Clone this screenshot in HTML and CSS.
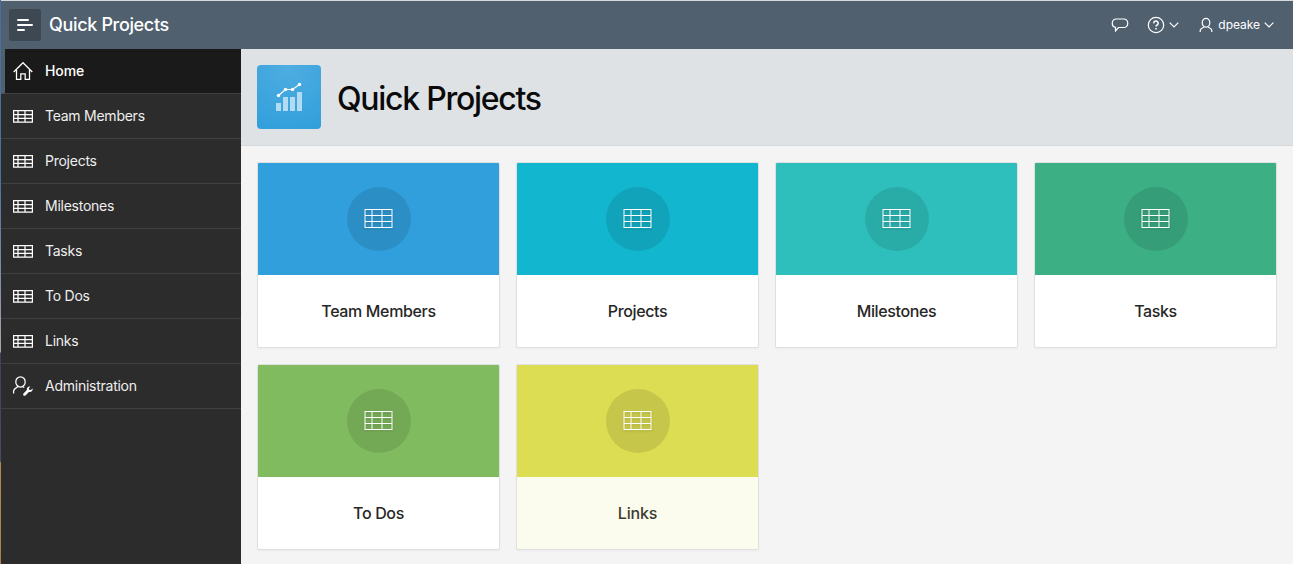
FILE: index.html
```html
<!DOCTYPE html>
<html lang="en">
<head>
<meta charset="utf-8">
<title>Quick Projects</title>
<link rel="stylesheet" href="styles.css">
</head>
<body>
<svg class="sprite" aria-hidden="true">
  <symbol id="table-sm" viewBox="0 0 20 20"><path d="M.6 4.600h18.800v11.600H.6zM.6 8.500h18.800M.6 12.300h18.800M5 4.600v11.600M12 4.600v11.600"/></symbol>
  <symbol id="table-lg" viewBox="0 0 32 32"><path d="M2 6.500h27M2 12.500h27M2 18.500h27M2 24.500h27"/><path d="M2 6v19M9 6v19M19 6v19M29 6v19"/></symbol>
  <symbol id="chevron" viewBox="0 0 10 6"><path d="M.7.7 5 5 9.300.7"/></symbol>
</svg>
<div class="app">
  <header class="header">
    <button class="menu-button" aria-label="Menu"><svg viewBox="0 0 32 32"><path d="M9 11h10M9 16h14M9 21h6"/></svg></button>
    <span class="brand">Quick Projects</span>
    <nav class="tools">
      <svg class="icon chat" viewBox="0 0 18 16"><path d="M5 2h8a3.700 3.700 0 0 1 3.700 3.700v1.100A3.700 3.700 0 0 1 13 10.500H7.500L4.500 14v-3.600A3.700 3.700 0 0 1 1.300 6.800V5.700A3.700 3.700 0 0 1 5 2z"/></svg>
      <span class="tool help"><svg class="icon help-icon" viewBox="0 0 18 18"><circle cx="9" cy="9" r="7.700"/><path stroke-width="1.500" d="M6.800 7.400A2.200 2.200 0 1 1 10.200 9C9.400 9.500 9 9.800 9 10.600M9 12v1.400"/></svg><svg class="icon chevron"><use href="#chevron"/></svg></span>
      <span class="tool user"><svg class="icon user-icon" viewBox="0 0 14 16"><ellipse cx="7" cy="5.700" rx="3.800" ry="4.400"/><path d="M1.200 15v-1.500c0-1.500 1-2 4-3.500M12.800 15v-1.500c0-1.500-1-2-4-3.500"/></svg><span class="user-name">dpeake</span><svg class="icon chevron"><use href="#chevron"/></svg></span>
    </nav>
  </header>
  <div class="body">
    <nav class="sidebar">
      <a class="item current"><svg class="icon" viewBox="0 0 20 20"><path d="m.7 11 9.300-9.300 9.300 9.300M3.500 9v9.400h4.300v-5.600h4.400v5.600h4.300V9"/></svg><span>Home</span></a>
      <a class="item"><svg class="icon"><use href="#table-sm"/></svg><span>Team Members</span></a>
      <a class="item"><svg class="icon"><use href="#table-sm"/></svg><span>Projects</span></a>
      <a class="item"><svg class="icon"><use href="#table-sm"/></svg><span>Milestones</span></a>
      <a class="item"><svg class="icon"><use href="#table-sm"/></svg><span>Tasks</span></a>
      <a class="item"><svg class="icon"><use href="#table-sm"/></svg><span>To Dos</span></a>
      <a class="item"><svg class="icon"><use href="#table-sm"/></svg><span>Links</span></a>
      <a class="item"><svg class="icon" viewBox="0 0 20 20"><ellipse cx="7.500" cy="5.900" rx="4.700" ry="5.100"/><path d="M5.300 10.400C2 12.400.6 13 .6 15v2.500M9.500 10.500l1.700 1.100"/><path class="wrench" d="M17.400 10.600c-2.200-.4-4 1.400-3.500 3.500l-3.400 3.300c-1.200 1.400.7 3.200 2 2l3.400-3.400c2.200.5 4.100-1.200 3.900-3.400l-2 1.500-1.600-.4-.4-1.500z"/></svg><span>Administration</span></a>
    </nav>
    <main class="main">
      <section class="hero">
        <div class="app-icon"><svg viewBox="0 0 64 64"><path class="bars" d="M19 38h5v8h-5zM26 32h5v14h-5zM33 32h5v14h-5zM40 27h5v19h-5z"/><path class="trend" d="m21.500 30.500 7-6h7l7-5"/><g class="dots"><circle cx="21.500" cy="30.500" r="1.700"/><circle cx="28.500" cy="24.500" r="1.700"/><circle cx="35.500" cy="24.500" r="1.700"/><circle cx="42.500" cy="19.500" r="1.700"/></g></svg></div>
        <h1>Quick Projects</h1>
      </section>
      <section class="cards">
        <article class="card blue"><div class="band"><div class="disc"><svg><use href="#table-lg"/></svg></div></div><h3>Team Members</h3></article>
        <article class="card cyan"><div class="band"><div class="disc"><svg><use href="#table-lg"/></svg></div></div><h3>Projects</h3></article>
        <article class="card teal"><div class="band"><div class="disc"><svg><use href="#table-lg"/></svg></div></div><h3>Milestones</h3></article>
        <article class="card green"><div class="band"><div class="disc"><svg><use href="#table-lg"/></svg></div></div><h3>Tasks</h3></article>
        <article class="card lime"><div class="band"><div class="disc"><svg><use href="#table-lg"/></svg></div></div><h3>To Dos</h3></article>
        <article class="card yellow"><div class="band"><div class="disc"><svg><use href="#table-lg"/></svg></div></div><h3>Links</h3></article>
      </section>
    </main>
  </div>
</div>
</body>
</html>
```
FILE: styles.css
```css
* { box-sizing: border-box; }
body {
  margin: 0;
  height: 564px;
  overflow: hidden;
  padding-left: 1px;
  background: linear-gradient(#46709f 0, #4a72a0 180px, #8d94a5 300px, #a5a8b2 352px, #3d4358 353px, #4a4d62 461px, #b08a50 463px, #a8824e 564px);
  font-family: Inter, "Liberation Sans", sans-serif;
}
.sprite { display: none; }
svg { fill: none; stroke: #fff; display: block; }
.app { height: 564px; border-top: 1px solid #d5dade; display: flex; flex-direction: column; }
.header { height: 48px; flex: none; background: #50606f; display: flex; align-items: center; padding: 0 19px 0 8px; color: #fff; }
.menu-button { width: 32px; height: 32px; padding: 0; border: 0; border-radius: 2px; background: #3e4853; }
.menu-button svg { stroke-width: 2; stroke-linecap: round; }
.brand { margin-left: 8px; padding-bottom: 2px; font-size: 18px; font-weight: 500; letter-spacing: -.34px; }
.tools { margin-left: auto; display: flex; align-items: center; font-size: 12px; }
.tools .icon { stroke-width: 1.2; }
.tool { display: flex; align-items: center; }
.chat { width: 18px; height: 16px; margin-right: 18px; }
.help-icon { width: 18px; height: 18px; }
.help { margin-right: 20px; }
.chevron { width: 10px; height: 6px; margin-left: 4px; }
.user-icon { width: 14px; height: 16px; margin-right: 5px; }
.user-name { padding-bottom: 1px; letter-spacing: -.03px; }
.body { flex: 1; display: flex; min-height: 0; }
.sidebar { width: 240px; flex: none; background: #2c2c2c; }
.item { height: 45px; border-bottom: 1px solid #414141; display: flex; align-items: center; padding-left: 12px; color: #efefef; font-size: 14px; letter-spacing: -.25px; }
.item .icon { width: 20px; height: 20px; margin-right: 12px; stroke-width: 1.25; overflow: visible; }
.item span { padding-bottom: 2px; }
.item .wrench { fill: #fff; stroke: none; }
.current { background: #1a1a1a; border-left: 4px solid #50606f; padding-left: 8px; color: #fff; font-weight: 500; letter-spacing: -.1px; }
.main { flex: 1; background: #f4f4f4; }
.hero { height: 97px; background: #dfe2e5; border-bottom: 1px solid #d6d9dc; display: flex; align-items: center; padding: 0 16px; }
.app-icon { width: 64px; height: 64px; border-radius: 4px; background: radial-gradient(circle at 50% 0, #4fade1, #309fdb); }
.bars { fill: #b3dbf3; stroke: none; }
.trend { stroke-width: 1.2; }
.dots { fill: #fff; stroke: none; }
h1 { margin: 4px 0 0 16px; font-size: 32px; line-height: 40px; font-weight: 500; letter-spacing: -1.27px; color: #0a0a0a; }
.cards { display: grid; grid-template-columns: repeat(4, 243px); gap: 16px; padding: 16px; }
.card { height: 186px; border: 1px solid #e0e0e0; border-radius: 2px; background: #fff; box-shadow: 0 1px 2px rgba(0,0,0,.04); overflow: hidden; }
.band { height: 112px; display: flex; align-items: center; justify-content: center; }
.disc { width: 64px; height: 64px; border-radius: 50%; background: rgba(0,0,0,.1); display: flex; align-items: center; justify-content: center; }
.disc svg { width: 32px; height: 32px; filter: drop-shadow(0 1px 1px rgba(0,0,0,.12)); }
.card h3 { margin: 0; text-align: center; line-height: 72px; font-size: 16px; font-weight: 500; letter-spacing: -.36px; color: #262626; }
.blue .band { background: #309fdb; }
.cyan .band { background: #13b6cf; }
.teal .band { background: #2ebfbc; }
.green .band { background: #3caf85; }
.lime .band { background: #81bb5f; }
.yellow .band { background: #dddd53; }
.yellow { background: #fbfcee; }
.yellow h3 { color: #3b3b30; letter-spacing: -.2px; }
```
